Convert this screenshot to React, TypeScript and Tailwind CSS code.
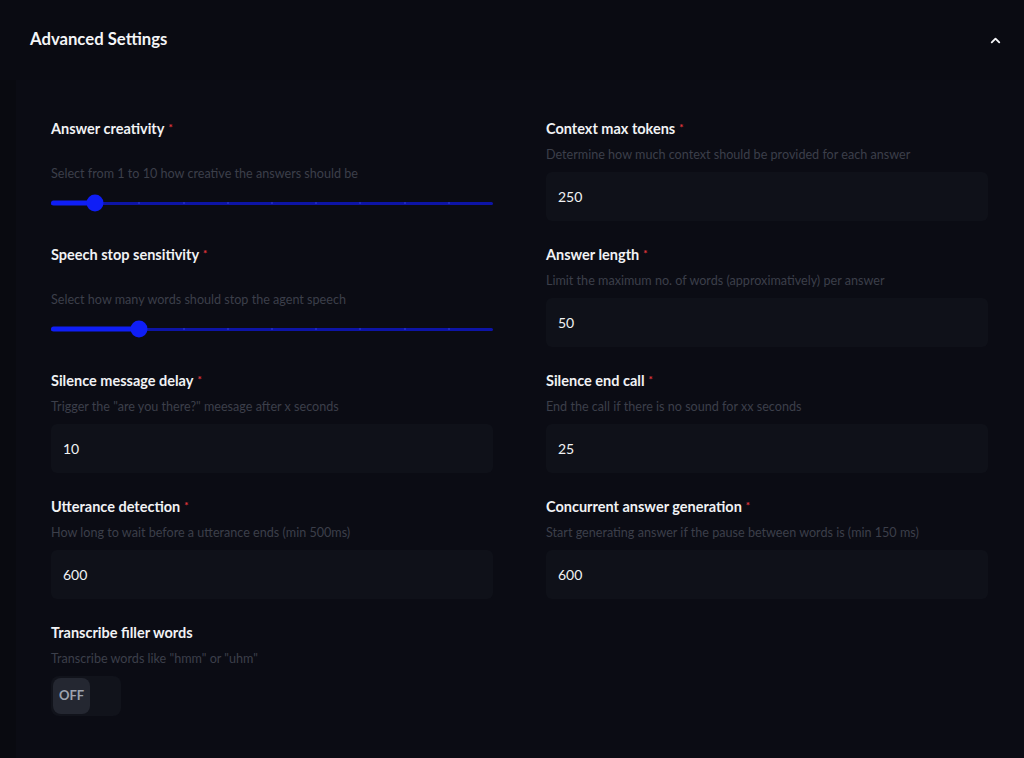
import { ChevronUp } from "lucide-react";

type Field =
  | { kind: "slider"; label: string; hint: string; step: number; required?: boolean }
  | { kind: "input"; label: string; hint: string; value: string; required?: boolean }
  | { kind: "toggle"; label: string; hint: string; on: boolean; required?: boolean };

const fields: Field[] = [
  {
    kind: "slider",
    label: "Answer creativity",
    hint: "Select from 1 to 10 how creative the answers should be",
    step: 1,
    required: true,
  },
  {
    kind: "input",
    label: "Context max tokens",
    hint: "Determine how much context should be provided for each answer",
    value: "250",
    required: true,
  },
  {
    kind: "slider",
    label: "Speech stop sensitivity",
    hint: "Select how many words should stop the agent speech",
    step: 2,
    required: true,
  },
  {
    kind: "input",
    label: "Answer length",
    hint: "Limit the maximum no. of words (approximatively) per answer",
    value: "50",
    required: true,
  },
  {
    kind: "input",
    label: "Silence message delay",
    hint: 'Trigger the "are you there?" meesage after x seconds',
    value: "10",
    required: true,
  },
  {
    kind: "input",
    label: "Silence end call",
    hint: "End the call if there is no sound for xx seconds",
    value: "25",
    required: true,
  },
  {
    kind: "input",
    label: "Utterance detection",
    hint: "How long to wait before a utterance ends (min 500ms)",
    value: "600",
    required: true,
  },
  {
    kind: "input",
    label: "Concurrent answer generation",
    hint: "Start generating answer if the pause between words is (min 150 ms)",
    value: "600",
    required: true,
  },
  {
    kind: "toggle",
    label: "Transcribe filler words",
    hint: 'Transcribe words like "hmm" or "uhm"',
    on: false,
  },
];

const STEPS = 10;

function Slider({ step }: { step: number }) {
  const pct = (step / STEPS) * 100;
  return (
    <div className="relative h-[36px] mt-[3px] flex items-center">
      <div className="relative w-full h-[3px] bg-[#0d14a6] rounded-full">
        {Array.from({ length: STEPS - 1 }).map((_, i) => (
          <span
            key={i}
            className="absolute top-1/2 -translate-y-1/2 -translate-x-1/2 w-[2px] h-[2px] rounded-full bg-[#2631c4]"
            style={{ left: `${((i + 1) / STEPS) * 100}%` }}
          />
        ))}
      </div>
      <div
        className="absolute left-0 top-1/2 -translate-y-1/2 h-[5px] bg-[#0f1ef6] rounded-full"
        style={{ width: `${pct}%` }}
      />
      <div
        className="absolute top-1/2 -translate-y-1/2 -translate-x-1/2 w-[17px] h-[17px] rounded-full bg-[#0f1ef6]"
        style={{ left: `${pct}%` }}
      />
    </div>
  );
}

function Toggle({ on }: { on: boolean }) {
  return (
    <div className="mt-[9px] w-[70px] h-[40px] rounded-lg bg-[#11131b] p-[2px] flex">
      <div className="w-[37px] h-full rounded-lg bg-[#242731] flex items-center justify-center text-[13px] font-bold text-[#9ea3ae]">
        {on ? "ON" : "OFF"}
      </div>
    </div>
  );
}

function SettingField({ field }: { field: Field }) {
  return (
    <div className="flex flex-col">
      <div className="h-[18px] flex items-center text-[14.5px] font-bold text-[#f1f2f4] leading-none">
        {field.label}
        {field.required && (
          <span className="ml-[4px] -mt-[5px] text-[10px] text-[#e2363c]">*</span>
        )}
      </div>
      <div
        className={`${
          field.kind === "slider" ? "mt-[28px]" : "mt-[9px]"
        } h-[16px] flex items-center text-[12.6px] text-[#3c3f4a] whitespace-nowrap`}
      >
        {field.hint}
      </div>
      {field.kind === "slider" && <Slider step={field.step} />}
      {field.kind === "input" && (
        <div className="mt-[9px] h-[49px] rounded-md bg-[#0f1119] flex items-center px-3 text-[14px] text-[#f1f2f4]">
          {field.value}
        </div>
      )}
      {field.kind === "toggle" && <Toggle on={field.on} />}
    </div>
  );
}

export default function App() {
  return (
    <div
      className="w-[1024px] h-[758px] overflow-hidden bg-[#090a10] flex flex-col"
      style={{ fontFamily: "Lato, 'Noto Sans', sans-serif" }}
    >
      <div className="h-[80px] shrink-0 flex items-center justify-between pl-[30px] pr-[21px] bg-[#0a0b12]">
        <h2 className="text-[16.7px] font-bold text-[#f4f5f7]">Advanced Settings</h2>
        <ChevronUp size={15} strokeWidth={3} className="text-[#f4f5f7]" />
      </div>
      <div className="flex-1 ml-[16px] bg-[#0b0c14] pl-[35px] pt-[40px]">
        <div className="grid grid-cols-[442px_442px] gap-x-[53px] gap-y-[25px]">
          {fields.map((f) => (
            <SettingField key={f.label} field={f} />
          ))}
        </div>
      </div>
    </div>
  );
}
